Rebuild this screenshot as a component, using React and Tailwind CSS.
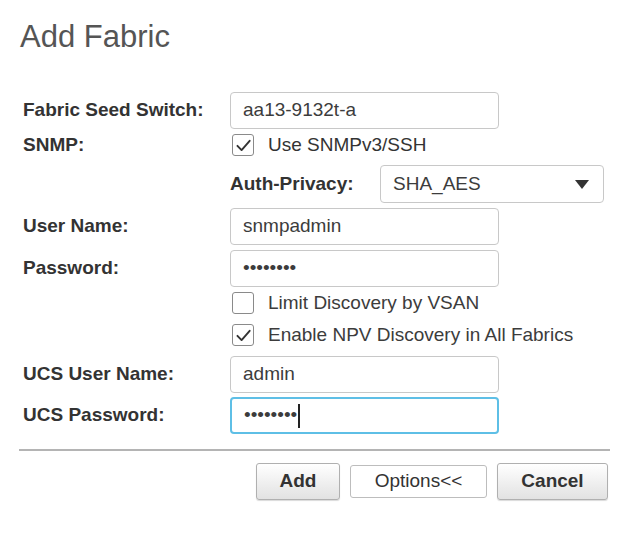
import React from 'react'

function Check({ checked }) {
  return (
    <span className="flex w-[22px] h-[22px] shrink-0 items-center justify-center rounded-[3px] border-[1.5px] border-[#8a8a8a] bg-white">
      {checked && (
        <svg width="17" height="17" viewBox="0 0 16 16" fill="none">
          <path d="M2.3 8.3 L6.2 12.3 L13.8 3.6" stroke="#333" strokeWidth="1.8" strokeLinecap="round" strokeLinejoin="round" />
        </svg>
      )}
    </span>
  )
}

function Field({ value, focused, caret }) {
  return (
    <div
      className={`flex items-center w-[269px] h-[37px] rounded-[4px] bg-white px-[12px] text-[19px] text-[#3c3c3c] ${
        focused ? 'border-2 border-[#5ebfe6]' : 'border border-[#c8c8c8]'
      }`}
    >
      <span>{value}</span>
      {caret && <span className="ml-[1px] w-[1.5px] h-[24px] bg-[#222]" />}
    </div>
  )
}

function Label({ children }) {
  return <div className="w-[210px] shrink-0 pl-[3px] font-bold text-[19px] text-[#333]">{children}</div>
}

export default function App() {
  const dots = '••••••••'

  return (
    <div className="w-[632px] h-[548px] bg-white px-[20px]" style={{ fontFamily: '"Liberation Sans", Arial, sans-serif' }}>
      <h1 className="pt-[18px] text-[31px] leading-[37px] text-[#555]">Add Fabric</h1>

      <div className="mt-[37px] flex flex-col">
        <div className="flex items-center h-[37px]">
          <Label>Fabric Seed Switch:</Label>
          <Field value="aa13-9132t-a" />
        </div>

        <div className="flex items-center h-[28px] mt-[2px]">
          <Label>SNMP:</Label>
          <div className="flex items-center gap-[14px] pl-[2px] text-[19px] text-[#333]">
            <Check checked />
            <span>Use SNMPv3/SSH</span>
          </div>
        </div>

        <div className="flex items-center h-[38px] mt-[6px] pl-[210px]">
          <div className="w-[150px] font-bold text-[19px] text-[#333]">Auth-Privacy:</div>
          <div className="flex items-center justify-between w-[224px] h-[38px] rounded-[4px] border border-[#c8c8c8] bg-white pl-[12px] pr-[13px] text-[19px] text-[#3c3c3c]">
            <span>SHA_AES</span>
            <svg width="16" height="11" viewBox="0 0 16 11">
              <path d="M1 1 H15 L8 10 Z" fill="#333" />
            </svg>
          </div>
        </div>

        <div className="flex items-center h-[37px] mt-[5px]">
          <Label>User Name:</Label>
          <Field value="snmpadmin" />
        </div>

        <div className="flex items-center h-[37px] mt-[5px]">
          <Label>Password:</Label>
          <Field value={dots} />
        </div>

        <div className="flex items-center h-[28px] mt-[2px] pl-[212px] gap-[14px] text-[19px] text-[#3c3c3c]">
          <Check />
          <span>Limit Discovery by VSAN</span>
        </div>

        <div className="flex items-center h-[28px] mt-[4px] pl-[212px] gap-[14px] text-[19px] text-[#3c3c3c]">
          <Check checked />
          <span>Enable NPV Discovery in All Fabrics</span>
        </div>

        <div className="flex items-center h-[37px] mt-[7px]">
          <Label>UCS User Name:</Label>
          <Field value="admin" />
        </div>

        <div className="flex items-center h-[37px] mt-[4px]">
          <Label>UCS Password:</Label>
          <Field value={dots} focused caret />
        </div>
      </div>

      <div className="mt-[15px] h-[2px] w-[591px] -ml-[1px] bg-[#b4b4b4]" />

      <div className="mt-[12px] flex items-center justify-end gap-[10px] pr-[4px]">
        <button className="w-[84px] h-[37px] rounded-[3px] border border-[#b0b0b0] bg-gradient-to-b from-white to-[#e2e2e2] text-[19px] font-bold text-[#333] shadow-[0_1px_1px_rgba(0,0,0,0.15)]">
          Add
        </button>
        <button className="w-[137px] h-[33px] rounded-[3px] border border-[#bdbdbd] bg-white text-[19px] text-[#333]">
          Options&lt;&lt;
        </button>
        <button className="w-[111px] h-[37px] rounded-[3px] border border-[#b0b0b0] bg-gradient-to-b from-white to-[#e2e2e2] text-[19px] font-bold text-[#333] shadow-[0_1px_1px_rgba(0,0,0,0.15)]">
          Cancel
        </button>
      </div>
    </div>
  )
}
